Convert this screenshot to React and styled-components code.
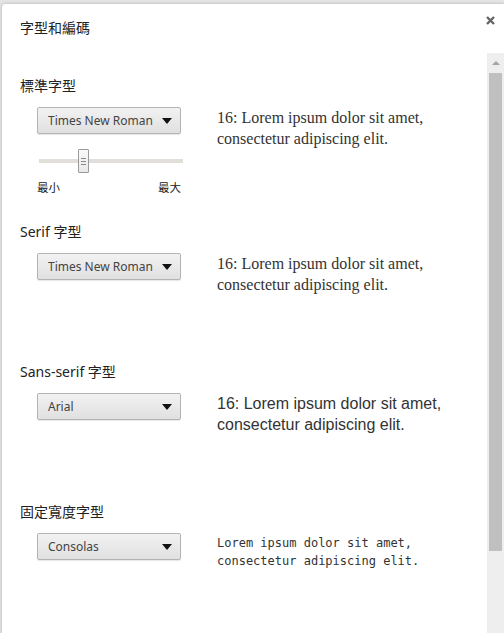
import React from "react";
import styled, { createGlobalStyle } from "styled-components";

const GlobalStyle = createGlobalStyle`
  html, body {
    margin: 0;
    padding: 0;
    background: #e4e4e4;
    overflow: hidden;
  }
  body {
    font-family: "Noto Sans", "Noto Sans CJK TC", sans-serif;
    color: #222;
  }
`;

const Page = styled.div`
  width: 504px;
  height: 633px;
  padding: 4px 0 0 2px;
  box-sizing: border-box;
`;

const Dialog = styled.div`
  height: 100%;
  background: #fff;
  border-top-left-radius: 3px;
  box-shadow: 0 0 3px rgba(0, 0, 0, 0.25);
  display: flex;
  flex-direction: column;
`;

const Header = styled.div`
  height: 49px;
  flex-shrink: 0;
  position: relative;
  display: flex;
  align-items: center;
  padding-left: 18px;
  padding-bottom: 1px;
  box-sizing: border-box;
`;

const Title = styled.h1`
  margin: 0;
  font-size: 14px;
  font-weight: normal;
  color: #222;
  line-height: 20px;
`;

const Close = styled.button`
  position: absolute;
  top: 8px;
  right: 6px;
  width: 16px;
  height: 16px;
  padding: 0;
  border: none;
  background: none;
  display: flex;
  align-items: center;
  justify-content: center;
`;

const Body = styled.div`
  flex: 1;
  display: flex;
  min-height: 0;
`;

const Content = styled.div`
  flex: 1;
  padding: 23px 0 0 18px;
`;

const Section = styled.section`
  margin-bottom: 11px;
`;

const Label = styled.div`
  font-size: 14px;
  line-height: 20px;
  color: #222;
  margin-bottom: 11px;
`;

const Row = styled.div`
  display: flex;
  align-items: flex-start;
`;

const Controls = styled.div`
  width: 180px;
  padding-left: 17px;
  padding-bottom: ${(p) => (p.$extra ? "15px" : "0")};
`;

const Select = styled.div`
  width: 144px;
  height: 27px;
  box-sizing: border-box;
  border: 1px solid #b4b4b4;
  border-radius: 2px;
  background: linear-gradient(#f2f2f2, #e0e0e0);
  box-shadow: 0 1px 1px rgba(0, 0, 0, 0.1);
  display: flex;
  align-items: center;
  justify-content: space-between;
  padding: 0 8px 0 10px;
  font-size: 12px;
  color: #444;
`;

const Arrow = styled.span`
  width: 0;
  height: 0;
  border-left: 5px solid transparent;
  border-right: 5px solid transparent;
  border-top: 6px solid #111;
  margin-top: 1px;
`;

const Slider = styled.div`
  position: relative;
  width: 144px;
  height: 24px;
  margin: 15px 0 0 2px;
  display: flex;
  align-items: center;
`;

const Track = styled.div`
  width: 100%;
  height: 4px;
  background: #e2dfda;
`;

const Thumb = styled.div`
  position: absolute;
  top: 0;
  left: 39px;
  width: 11px;
  height: 24px;
  box-sizing: border-box;
  border: 1px solid #9a9a9a;
  border-radius: 1px;
  background: linear-gradient(#fafafa, #e8e8e8);
  display: flex;
  flex-direction: column;
  align-items: center;
  justify-content: center;
  gap: 2px;
`;

const Grip = styled.span`
  width: 5px;
  height: 1px;
  background: #888;
`;

const Ends = styled.div`
  width: 144px;
  display: flex;
  justify-content: space-between;
  font-size: 11.5px;
  line-height: 16px;
  margin-top: 7px;
  color: #222;
`;

const Sample = styled.div`
  min-height: 98px;
  font-family: ${(p) => p.$font};
  font-size: ${(p) => p.$size};
  line-height: ${(p) => p.$lh};
  color: #333;
  padding-top: ${(p) => p.$pt || "0"};
`;

const Scrollbar = styled.div`
  width: 17px;
  flex-shrink: 0;
  background: #eeeeee;
  display: flex;
  flex-direction: column;
  align-items: center;
`;

const ScrollUp = styled.div`
  height: 20px;
  width: 100%;
  display: flex;
  align-items: center;
  justify-content: center;
  &::before {
    content: "";
    border-left: 4px solid transparent;
    border-right: 4px solid transparent;
    border-bottom: 4px solid #a3a3a3;
  }
`;

const ScrollThumb = styled.div`
  width: 13px;
  height: 478px;
  background: #c0c0c0;
`;

const SERIF = '"Liberation Serif", "Times New Roman", serif';
const SANS = '"Liberation Sans", Arial, sans-serif';
const MONO = '"DejaVu Sans Mono", "Liberation Mono", monospace';

const SelectBox = ({ value }) => (
  <Select>
    <span>{value}</span>
    <Arrow />
  </Select>
);

export default function App() {
  return (
    <Page>
      <GlobalStyle />
      <Dialog>
        <Header>
          <Title>字型和編碼</Title>
          <Close aria-label="close">
            <svg width="9" height="9" viewBox="0 0 9 9">
              <path d="M1 1L8 8M8 1L1 8" stroke="#666" strokeWidth="2.4" />
            </svg>
          </Close>
        </Header>
        <Body>
          <Content>
            <Section>
              <Label>標準字型</Label>
              <Row>
                <Controls $extra>
                  <SelectBox value="Times New Roman" />
                  <Slider>
                    <Track />
                    <Thumb>
                      <Grip />
                      <Grip />
                      <Grip />
                    </Thumb>
                  </Slider>
                  <Ends>
                    <span>最小</span>
                    <span>最大</span>
                  </Ends>
                </Controls>
                <Sample $font={SERIF} $size="16px" $lh="21px">
                  16: Lorem ipsum dolor sit amet,
                  <br />
                  consectetur adipiscing elit.
                </Sample>
              </Row>
            </Section>
            <Section>
              <Label>Serif 字型</Label>
              <Row>
                <Controls>
                  <SelectBox value="Times New Roman" />
                </Controls>
                <Sample $font={SERIF} $size="16px" $lh="21px">
                  16: Lorem ipsum dolor sit amet,
                  <br />
                  consectetur adipiscing elit.
                </Sample>
              </Row>
            </Section>
            <Section>
              <Label>Sans-serif 字型</Label>
              <Row>
                <Controls>
                  <SelectBox value="Arial" />
                </Controls>
                <Sample $font={SANS} $size="16px" $lh="21px">
                  16: Lorem ipsum dolor sit amet,
                  <br />
                  consectetur adipiscing elit.
                </Sample>
              </Row>
            </Section>
            <Section>
              <Label>固定寬度字型</Label>
              <Row>
                <Controls>
                  <SelectBox value="Consolas" />
                </Controls>
                <Sample $font={MONO} $size="12px" $lh="18px" $pt="1px">
                  Lorem ipsum dolor sit amet,
                  <br />
                  consectetur adipiscing elit.
                </Sample>
              </Row>
            </Section>
          </Content>
          <Scrollbar>
            <ScrollUp />
            <ScrollThumb />
          </Scrollbar>
        </Body>
      </Dialog>
    </Page>
  );
}
